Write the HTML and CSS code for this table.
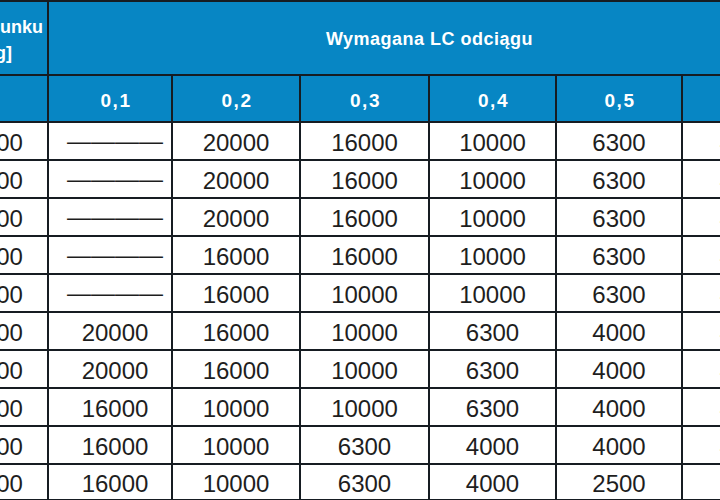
FILE: index.html
```html
<!DOCTYPE html>
<html lang="pl">
<head>
<meta charset="utf-8">
<title>Wymagana LC odciągu</title>
<link rel="stylesheet" href="styles.css">
</head>
<body>
<div class="viewport">
  <div class="grid">
    <div class="th th-left"><span class="l1">Masa ładunku</span><span class="l2">brutto [kg]</span></div>
    <div class="th th-title">Wymagana LC odciągu</div>

    <div class="th"></div>
    <div class="th sub c1">0,1</div>
    <div class="th sub">0,2</div>
    <div class="th sub">0,3</div>
    <div class="th sub">0,4</div>
    <div class="th sub">0,5</div>
    <div class="th sub">0,6</div>

    <div class="td c0">10000</div><div class="td c1 dash">————</div><div class="td">20000</div><div class="td">16000</div><div class="td">10000</div><div class="td">6300</div><div class="td">4000</div>
    <div class="td c0">12500</div><div class="td c1 dash">————</div><div class="td">20000</div><div class="td">16000</div><div class="td">10000</div><div class="td">6300</div><div class="td">4000</div>
    <div class="td c0">16000</div><div class="td c1 dash">————</div><div class="td">20000</div><div class="td">16000</div><div class="td">10000</div><div class="td">6300</div><div class="td">4000</div>
    <div class="td c0">20000</div><div class="td c1 dash">————</div><div class="td">16000</div><div class="td">16000</div><div class="td">10000</div><div class="td">6300</div><div class="td">4000</div>
    <div class="td c0">25000</div><div class="td c1 dash">————</div><div class="td">16000</div><div class="td">10000</div><div class="td">10000</div><div class="td">6300</div><div class="td">4000</div>
    <div class="td c0">31500</div><div class="td c1">20000</div><div class="td">16000</div><div class="td">10000</div><div class="td">6300</div><div class="td">4000</div><div class="td">4000</div>
    <div class="td c0">40000</div><div class="td c1">20000</div><div class="td">16000</div><div class="td">10000</div><div class="td">6300</div><div class="td">4000</div><div class="td">4000</div>
    <div class="td c0">50000</div><div class="td c1">16000</div><div class="td">10000</div><div class="td">10000</div><div class="td">6300</div><div class="td">4000</div><div class="td">4000</div>
    <div class="td c0">63000</div><div class="td c1">16000</div><div class="td">10000</div><div class="td">6300</div><div class="td">4000</div><div class="td">4000</div><div class="td">4000</div>
    <div class="td c0">80000</div><div class="td c1">16000</div><div class="td">10000</div><div class="td">6300</div><div class="td">4000</div><div class="td">2500</div><div class="td">2500</div>
  </div>
</div>
</body>
</html>
```
FILE: styles.css
```css
html, body {
  margin: 0;
  padding: 0;
  background: #ffffff;
}

.viewport {
  width: 720px;
  height: 500px;
  overflow: hidden;
}

.grid {
  display: grid;
  grid-template-columns: 127px 122px 126px 127px 125px 124px 127px;
  grid-template-rows: 72px 45px repeat(9, 36px) 34px;
  gap: 2px;
  padding: 2px;
  margin-left: -82px;
  width: max-content;
  background: #161c22;
  font-family: "Liberation Sans", Arial, sans-serif;
}

.th {
  background: #0786c4;
  color: #ffffff;
  font-weight: bold;
  font-size: 18px;
  display: flex;
  align-items: center;
  justify-content: center;
  text-align: center;
}

.th-left {
  flex-direction: column;
  align-items: flex-end;
  line-height: 26px;
  padding-top: 4px;
  box-sizing: border-box;
  white-space: nowrap;
}

.l1 {
  padding-right: 4px;
}

.l2 {
  padding-right: 35px;
}

.th-title {
  grid-column: 2 / span 6;
  letter-spacing: 0.5px;
  padding-top: 3px;
  box-sizing: border-box;
}

.sub {
  font-size: 19px;
  letter-spacing: 1.5px;
  padding-top: 4px;
  padding-left: 2px;
  box-sizing: border-box;
}

.td {
  background: #ffffff;
  color: #1e1e1e;
  font-size: 24px;
  display: flex;
  align-items: center;
  justify-content: center;
  padding-top: 3px;
  box-sizing: border-box;
}

.c1 {
  padding-left: 10px;
}

.sub.c1 {
  padding-left: 12px;
}

.c0 {
  padding-left: 12px;
}

.dash {
  padding-top: 0;
}
```
